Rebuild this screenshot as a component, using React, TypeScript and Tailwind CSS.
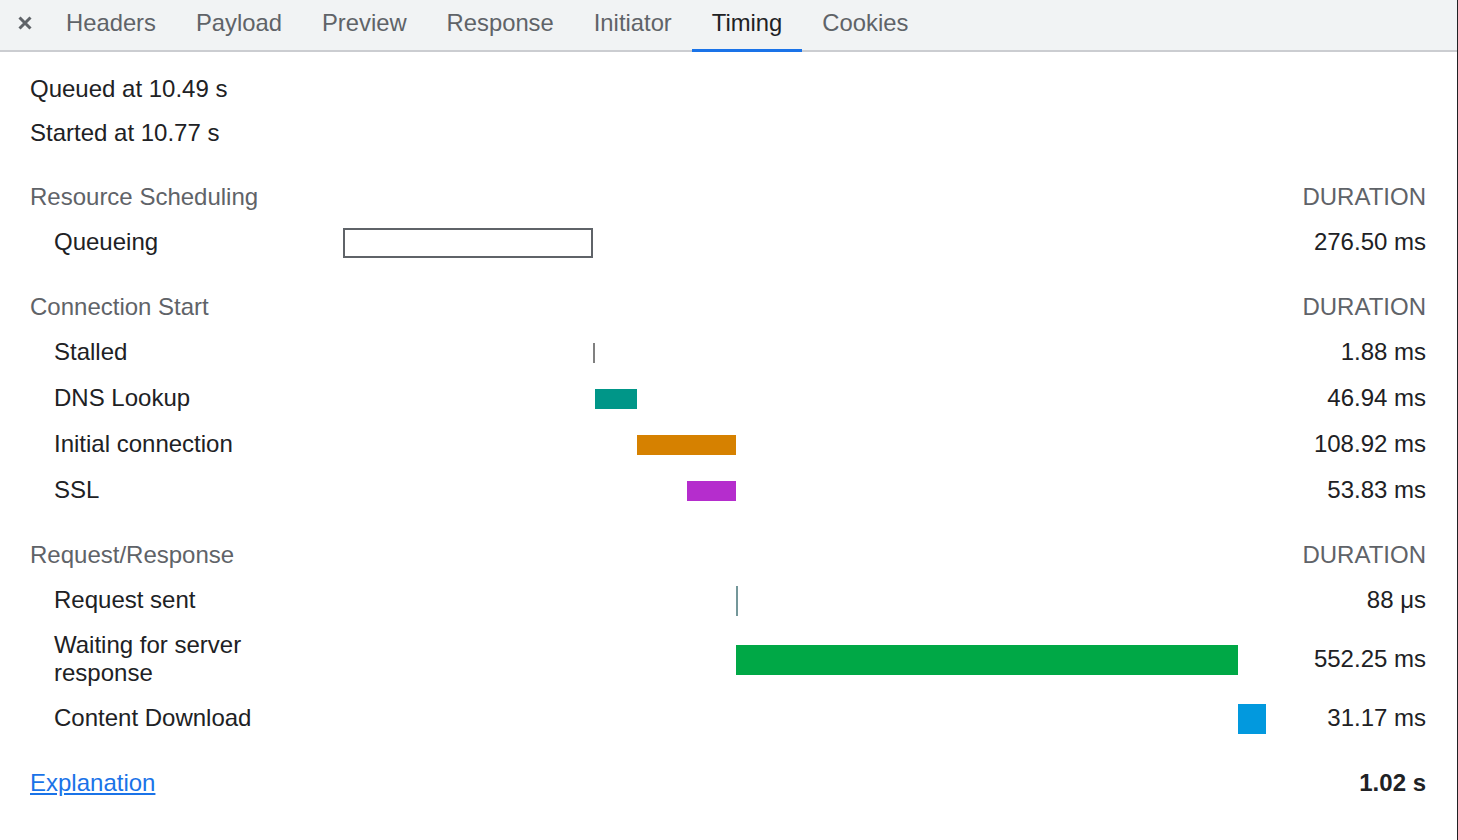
import React from "react";

type Bar = { left: number; width: number; height: number; className: string };
type Row = { label: string; duration: string; bar: Bar; tall?: boolean };

const tabs = ["Headers", "Payload", "Preview", "Response", "Initiator", "Timing", "Cookies"];

const sections: { title: string; rows: Row[] }[] = [
  {
    title: "Resource Scheduling",
    rows: [
      {
        label: "Queueing",
        duration: "276.50 ms",
        bar: { left: 0, width: 250, height: 30, className: "bg-white border-2 border-[#5f6368]" },
      },
    ],
  },
  {
    title: "Connection Start",
    rows: [
      { label: "Stalled", duration: "1.88 ms", bar: { left: 250, width: 2, height: 20, className: "bg-[#808080]" } },
      { label: "DNS Lookup", duration: "46.94 ms", bar: { left: 252, width: 42, height: 20, className: "bg-[#009688]" } },
      { label: "Initial connection", duration: "108.92 ms", bar: { left: 294, width: 99, height: 20, className: "bg-[#d68100]" } },
      { label: "SSL", duration: "53.83 ms", bar: { left: 344, width: 49, height: 20, className: "bg-[#b52dcd]" } },
    ],
  },
  {
    title: "Request/Response",
    rows: [
      { label: "Request sent", duration: "88 μs", bar: { left: 393, width: 2, height: 30, className: "bg-[#74979a]" } },
      {
        label: "Waiting for server response",
        duration: "552.25 ms",
        tall: true,
        bar: { left: 393, width: 502, height: 30, className: "bg-[#00a846]" },
      },
      { label: "Content Download", duration: "31.17 ms", bar: { left: 895, width: 28, height: 30, className: "bg-[#0299de]" } },
    ],
  },
];

function TimingRow({ row }: { row: Row }) {
  return (
    <div className={`flex items-center pl-[24px] ${row.tall ? "h-[72px]" : "h-[46px]"}`}>
      <div className="w-[289px] pr-4 leading-[28px] text-[#202124]">{row.label}</div>
      <div className="relative h-full w-[923px]">
        <div
          className={`absolute top-1/2 -translate-y-1/2 mt-[1px] ${row.bar.className}`}
          style={{ left: row.bar.left, width: row.bar.width, height: row.bar.height }}
        />
      </div>
      <div className="flex-1 text-right text-[#202124]">{row.duration}</div>
    </div>
  );
}

export default function App() {
  return (
    <div className="w-[1458px] h-[840px] overflow-hidden bg-white border-r border-[#202124] font-['Liberation_Sans',Arial,sans-serif] text-[24px]">
      <div className="flex h-[52px] items-stretch bg-[#f1f3f4] border-b-2 border-[#cbcdd1] text-[23.8px]">
        <div className="flex w-[46px] items-center justify-center pl-[3px] pb-1">
          <svg width="16" height="16" viewBox="0 0 16 16">
            <path d="M2.5 2.5 L13.5 13.5 M13.5 2.5 L2.5 13.5" stroke="#5f6368" strokeWidth="3" fill="none" />
          </svg>
        </div>
        {tabs.map((t) => (
          <div
            key={t}
            className={`relative flex items-center px-5 pb-1 ${t === "Timing" ? "text-[#202124]" : "text-[#5f6368]"}`}
          >
            {t}
            {t === "Timing" && <div className="absolute left-0 right-0 bottom-[-2px] h-[3px] bg-[#1a73e8]" />}
          </div>
        ))}
      </div>

      <div className="pl-[30px] pr-[31px] pt-[15px]">
        <div className="h-[44px] leading-[44px] text-[#202124]">Queued at 10.49 s</div>
        <div className="h-[44px] leading-[44px] text-[#202124]">Started at 10.77 s</div>

        {sections.map((s) => (
          <div key={s.title} className="mt-[19px]">
            <div className="flex h-[45px] items-center justify-between text-[#5f6368]">
              <span>{s.title}</span>
              <span>DURATION</span>
            </div>
            {s.rows.map((r) => (
              <TimingRow key={r.label} row={r} />
            ))}
          </div>
        ))}

        <div className="mt-[19px] flex h-[46px] items-center justify-between">
          <a href="#" className="text-[#1a73e8] underline">
            Explanation
          </a>
          <span className="font-bold text-[#202124]">1.02 s</span>
        </div>
      </div>
    </div>
  );
}
